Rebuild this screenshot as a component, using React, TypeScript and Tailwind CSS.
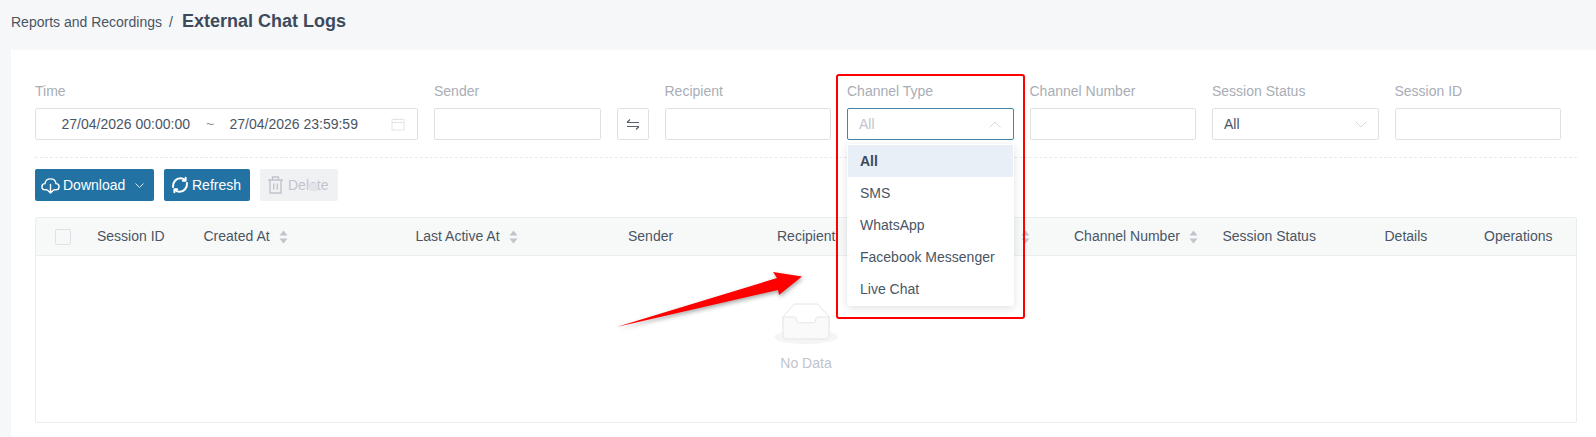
import React from "react";

const Sort = () => (
  <svg width="9" height="14" viewBox="0 0 9 14" className="shrink-0 ml-[9px]">
    <path d="M4.5 0.5L8.5 5.5H0.5Z" fill="#c0c4cc" />
    <path d="M4.5 13.5L8.5 8.5H0.5Z" fill="#c0c4cc" />
  </svg>
);

const Label = ({ children }: { children: React.ReactNode }) => (
  <div className="h-5 leading-5 text-sm text-[#a9adb5] mb-[7px]">{children}</div>
);

const Input = () => <div className="h-8 rounded-[2px] border border-[#dfe1e4] bg-white" />;

const Field = ({ label, children }: { label: string; children?: React.ReactNode }) => (
  <div className="relative w-[166.5px] shrink-0">
    <Label>{label}</Label>
    {children ?? <Input />}
  </div>
);

const Chevron = ({ up, color }: { up?: boolean; color: string }) => (
  <svg width="12" height="7" viewBox="0 0 12 7" fill="none">
    <path d={up ? "M0.5 6.5L6 1L11.5 6.5" : "M0.5 0.5L6 6L11.5 0.5"} stroke={color} strokeWidth="1" />
  </svg>
);

const Th = ({ w, label, sort }: { w: string; label: string; sort?: boolean }) => (
  <div className={`${w} shrink-0 pl-3 flex items-center whitespace-nowrap`}>
    <span className="mb-[2px]">{label}</span>
    {sort && <Sort />}
  </div>
);

export default function App() {
  return (
    <div className="relative h-[437px] w-[1596px] overflow-hidden bg-[#f5f7f9] font-['Liberation_Sans',Arial,sans-serif]">
      <div className="h-[50px] pl-[11px] pb-[6px] flex items-center text-sm text-[#4a5564]">
        <span>Reports and Recordings</span>
        <span className="ml-[7px] mr-[9px]">/</span>
        <span className="text-[18px] font-bold text-[#3d4a5c]">External Chat Logs</span>
      </div>

      <div className="ml-[11px] h-[387px] bg-white pl-6 pr-[19px] pt-[31px]">
        <div className="flex gap-4">
          <div className="w-[383px] shrink-0">
            <Label>Time</Label>
            <div className="h-8 rounded-[2px] border border-[#dfe1e4] flex items-center pl-[25.5px] text-sm text-[#4a5564]">
              <span>27/04/2026 00:00:00</span>
              <span className="ml-4 w-[8px] text-[#8a909a]">~</span>
              <span className="ml-[15.5px]">27/04/2026 23:59:59</span>
              <svg width="14" height="14" viewBox="0 0 14 14" fill="none" stroke="#e3e5e8" className="ml-[33px]">
                <rect x="1" y="2.5" width="12" height="10.5" />
                <path d="M1 5.5H13M4 1V3.5M10 1V3.5" />
              </svg>
            </div>
          </div>
          <Field label="Sender" />
          <div className="pt-[27px] shrink-0">
            <div className="w-8 h-8 rounded-[2px] border border-[#dfe1e4] flex items-center justify-center">
              <svg width="14" height="13" viewBox="0 0 14 13" fill="none" stroke="#56606d" strokeWidth="1.2">
                <path d="M1 4.5H13M1 4.5L4 1.5M13 8.5H1M13 8.5L10 11.5" />
              </svg>
            </div>
          </div>
          <Field label="Recipient" />
          <Field label="Channel Type">
            <div className="h-8 rounded-[2px] border border-[#3f84a9] flex items-center justify-between pl-[11px] pr-[12px] text-sm text-[#c0c4cc]">
              <span>All</span>
              <Chevron up color="#d5d8dc" />
            </div>
            <div className="absolute left-0 right-0 top-[63px] z-10 rounded-[2px] bg-white shadow-[0_2px_8px_rgba(0,0,0,0.12)] text-sm text-[#4a5564] p-[1px]">
              <div className="h-8 leading-8 pl-3 bg-[#e8eff6] font-bold text-[#3d4a5c]">All</div>
              <div className="h-8 leading-8 pl-3">SMS</div>
              <div className="h-8 leading-8 pl-3">WhatsApp</div>
              <div className="h-8 leading-8 pl-3">Facebook Messenger</div>
              <div className="h-8 leading-8 pl-3">Live Chat</div>
            </div>
          </Field>
          <Field label="Channel Number" />
          <Field label="Session Status">
            <div className="h-8 rounded-[2px] border border-[#dfe1e4] flex items-center justify-between pl-[11px] pr-[11px] text-sm text-[#4a5564]">
              <span>All</span>
              <Chevron color="#d5d8dc" />
            </div>
          </Field>
          <Field label="Session ID" />
        </div>

        <div className="mt-[17px] border-t border-dashed border-[#e8eaec]" />

        <div className="mt-[11px] flex gap-[10px] text-sm">
          <div className="w-[119px] h-8 rounded-[2px] bg-[#2272a3] text-white flex items-center pl-[6px]">
            <svg width="19" height="19" viewBox="0 0 20 20" fill="none" stroke="white" strokeWidth="1.5" strokeLinecap="round" strokeLinejoin="round">
              <path d="M6 14.5H4.5C2.5 14.5 1 13 1 11.2C1 9.4 2.4 8 4.2 8C4.6 5.2 6.9 3 10 3C13.1 3 15.4 5.2 15.8 8C17.6 8 19 9.4 19 11.2C19 13 17.5 14.5 15.5 14.5H14" />
              <path d="M10 9V18M7 15L10 18L13 15" />
            </svg>
            <span className="ml-[3px]">Download</span>
            <svg width="9" height="5" viewBox="0 0 9 5" fill="none" stroke="#d6e6f0" className="ml-[10px]">
              <path d="M0.5 0.5L4.5 4.5L8.5 0.5" />
            </svg>
          </div>
          <div className="w-[86px] h-8 rounded-[2px] bg-[#2272a3] text-white flex items-center pl-[7px]">
            <svg width="18" height="18" viewBox="0 0 18 18" fill="none" stroke="white" strokeWidth="2" strokeLinecap="round" strokeLinejoin="round">
              <path d="M2 11C1.6 6.5 5 1.8 10 2.2C11.6 2.3 13.2 3.2 14.2 4.4" />
              <path d="M16 7C16.4 11.5 13 16.2 8 15.8C6.4 15.7 4.8 14.8 3.8 13.6" />
              <path d="M14.6 1.8V4.8H11.8M3.4 16.2V13.2H6.2" />
            </svg>
            <span className="ml-[3px]">Refresh</span>
          </div>
          <div className="relative w-[78px] h-8 rounded-[2px] bg-[#f0f1f3] text-[#c0c4cc] flex items-center pl-[7px]">
            <svg width="17" height="18" viewBox="0 0 16 18" fill="none" stroke="#c0c4cc" strokeWidth="1.4">
              <path d="M0.5 4H15.5M5 4V1H11V4M2.5 4V17H13.5V4M6.2 7.5V13.5M9.8 7.5V13.5" />
            </svg>
            <span className="ml-[4px]">Delete</span>
            <div className="absolute left-[50px] top-[14px] w-2 h-2 bg-[#e3e4e7]" />
          </div>
        </div>

        <div className="mt-4 h-[206px] border border-[#ebeef0] rounded-[2px]">
          <div className="h-[38px] bg-[#f7f9f9] border-b border-[#ebeef0] flex items-center text-sm text-[#4a5564]">
            <div className="w-[49px] shrink-0 pl-[19px]">
              <div className="w-4 h-4 rounded-[2px] border border-[#dfe1e4] bg-[#f7f8f9]" />
            </div>
            <Th w="w-[106.5px]" label="Session ID" />
            <Th w="w-[212px]" label="Created At" sort />
            <Th w="w-[212.5px]" label="Last Active At" sort />
            <Th w="w-[149px]" label="Sender" />
            <Th w="w-[149px]" label="Recipient" />
            <Th w="w-[148px]" label="Channel Type" sort />
            <Th w="w-[148.5px]" label="Channel Number" sort />
            <Th w="w-[162px]" label="Session Status" />
            <Th w="w-[99.5px]" label="Details" />
            <Th w="w-[104px]" label="Operations" />
          </div>
          <div className="flex flex-col items-center pt-[47px]">
            <svg width="64" height="41" viewBox="0 0 64 41">
              <g transform="translate(0 1)" fill="none" fillRule="evenodd">
                <ellipse fill="#f5f5f5" cx="32" cy="33" rx="32" ry="7" />
                <g fillRule="nonzero" stroke="#e4e4e4">
                  <path d="M55 12.76L44.854 1.258C44.367.474 43.656 0 42.907 0H21.093c-.749 0-1.46.474-1.947 1.257L9 12.761V22h46v-9.24z" />
                  <path d="M41.613 15.931c0-1.605.994-2.93 2.227-2.931H55v18.137C55 33.26 53.68 35 52.05 35h-40.1C10.32 35 9 33.259 9 31.137V13h11.16c1.233 0 2.227 1.323 2.227 2.928v.022c0 1.605 1.005 2.901 2.237 2.901h14.752c1.232 0 2.237-1.308 2.237-2.913v-.007z" fill="#fafafa" />
                </g>
              </g>
            </svg>
            <div className="mt-[9px] h-5 leading-5 text-sm text-[#c0c4cc]">No Data</div>
          </div>
        </div>
      </div>

      <div className="absolute left-[836px] top-[74px] w-[188.5px] h-[245px] border-2 border-[#ff0000] rounded-[3px] z-20" />

      <svg className="absolute left-[610px] top-[265px] z-20 drop-shadow-[1px_2px_2px_rgba(0,0,0,0.35)]" width="200" height="70" viewBox="610 265 200 70">
        <path d="M616.5 327L777 278L773 272L802 276.5L779 295L778 290Z" fill="#ff0000" />
      </svg>
    </div>
  );
}
